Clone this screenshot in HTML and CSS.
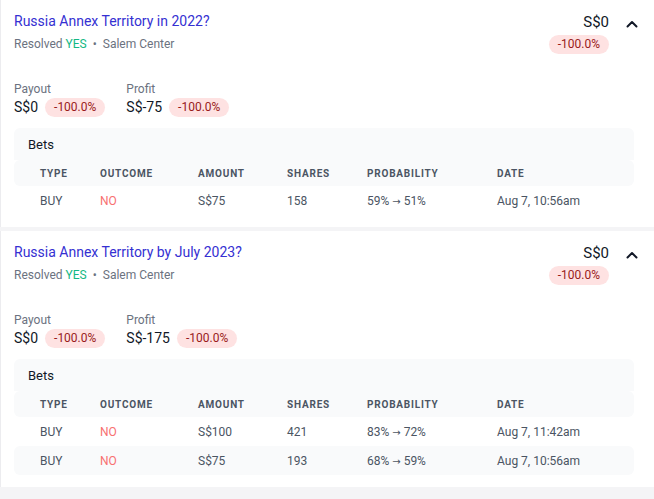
FILE: index.html
```html
<!DOCTYPE html>
<html>
<head>
<meta charset="utf-8">
<link rel="stylesheet" href="styles.css">
</head>
<body>
<div class="list">
  <div class="card">
    <div class="top">
      <div class="info">
        <div class="title">Russia Annex Territory in 2022?</div>
        <div class="meta">Resolved <span class="yes">YES</span><span class="dot">•</span>Salem Center</div>
      </div>
      <div class="summary">
        <div class="sum-val">S$0</div>
        <span class="badge">-100.0%</span>
      </div>
      <svg class="chev" width="12" height="8" viewBox="0 0 12 8"><path d="M1.5 6.5 L6 2 L10.5 6.5" fill="none" stroke="#111827" stroke-width="2" stroke-linecap="round" stroke-linejoin="round"/></svg>
    </div>
    <div class="stats">
      <div class="stat">
        <div class="label">Payout</div>
        <div class="valrow"><span class="val">S$0</span><span class="badge">-100.0%</span></div>
      </div>
      <div class="stat">
        <div class="label">Profit</div>
        <div class="valrow"><span class="val">S$-75</span><span class="badge">-100.0%</span></div>
      </div>
    </div>
    <div class="bets">
      <div class="bets-title">Bets</div>
      <div class="row head">
        <span>Type</span><span>Outcome</span><span>Amount</span><span>Shares</span><span>Probability</span><span>Date</span>
      </div>
      <div class="row">
        <span>BUY</span><span class="no">NO</span><span>S$75</span><span>158</span><span>59% <span class="arr">→</span> 51%</span><span>Aug 7, 10:56am</span>
      </div>
    </div>
  </div>
  <div class="card">
    <div class="top">
      <div class="info">
        <div class="title">Russia Annex Territory by July 2023?</div>
        <div class="meta">Resolved <span class="yes">YES</span><span class="dot">•</span>Salem Center</div>
      </div>
      <div class="summary">
        <div class="sum-val">S$0</div>
        <span class="badge">-100.0%</span>
      </div>
      <svg class="chev" width="12" height="8" viewBox="0 0 12 8"><path d="M1.5 6.5 L6 2 L10.5 6.5" fill="none" stroke="#111827" stroke-width="2" stroke-linecap="round" stroke-linejoin="round"/></svg>
    </div>
    <div class="stats">
      <div class="stat">
        <div class="label">Payout</div>
        <div class="valrow"><span class="val">S$0</span><span class="badge">-100.0%</span></div>
      </div>
      <div class="stat">
        <div class="label">Profit</div>
        <div class="valrow"><span class="val">S$-175</span><span class="badge">-100.0%</span></div>
      </div>
    </div>
    <div class="bets">
      <div class="bets-title">Bets</div>
      <div class="row head">
        <span>Type</span><span>Outcome</span><span>Amount</span><span>Shares</span><span>Probability</span><span>Date</span>
      </div>
      <div class="row">
        <span>BUY</span><span class="no">NO</span><span>S$100</span><span>421</span><span>83% <span class="arr">→</span> 72%</span><span>Aug 7, 11:42am</span>
      </div>
      <div class="row alt">
        <span>BUY</span><span class="no">NO</span><span>S$75</span><span>193</span><span>68% <span class="arr">→</span> 59%</span><span>Aug 7, 10:56am</span>
      </div>
    </div>
  </div>
</div>
</body>
</html>
```

FILE: styles.css
```css
html, body {
  margin: 0;
  padding: 0;
  background: #f4f4f6;
}
body {
  font-family: "Roboto", "Noto Sans", sans-serif;
  color: #111827;
}
.list {
  display: flex;
  flex-direction: column;
  gap: 4px;
}
.card {
  background: #ffffff;
  border-left: 1px solid #ececef;
  padding: 11px 16px 12px 13px;
}
.top {
  display: flex;
  align-items: flex-start;
}
.info {
  flex: 1;
}
.title {
  font-size: 14px;
  line-height: 20px;
  color: #3530d2;
}
.meta {
  margin-top: 5px;
  font-size: 12px;
  line-height: 16px;
  color: #6b7280;
}
.yes {
  color: #14b884;
}
.dot {
  margin: 0 6px;
}
.summary {
  display: flex;
  flex-direction: column;
  align-items: flex-end;
  gap: 2px;
}
.sum-val {
  font-size: 15px;
  line-height: 22px;
}
.chev {
  margin: 9px 0 0 17px;
}
.badge {
  display: inline-block;
  background: #fee2e2;
  color: #991b1b;
  font-size: 12px;
  line-height: 19px;
  padding: 0 9px;
  border-radius: 10px;
}
.stats {
  display: flex;
  gap: 21px;
  margin-top: 27px;
}
.label {
  font-size: 12px;
  line-height: 16px;
  color: #6b7280;
}
.valrow {
  display: flex;
  align-items: center;
  gap: 7px;
  height: 20px;
}
.val {
  font-size: 14px;
}
.bets {
  margin: 11px 4px 0 0;
}
.bets-title {
  background: #f9fafb;
  border-radius: 6px 6px 0 0;
  height: 32px;
  line-height: 34px;
  padding-left: 14px;
  font-size: 13px;
}
.row {
  display: grid;
  grid-template-columns: 60px 98px 89px 80px 130px 1fr;
  padding-left: 26px;
  height: 29px;
  align-items: center;
  font-size: 12px;
  color: #4b5563;
  border-radius: 6px;
}
.row.head {
  height: 26px;
  background: #f9fafb;
  font-size: 10px;
  font-weight: 700;
  text-transform: uppercase;
  letter-spacing: 0.8px;
}
.row.alt {
  background: #f9fafb;
}
.arr {
  font-family: "DejaVu Sans", sans-serif;
  font-size: 10px;
}
.no {
  color: #f87171;
}
```
